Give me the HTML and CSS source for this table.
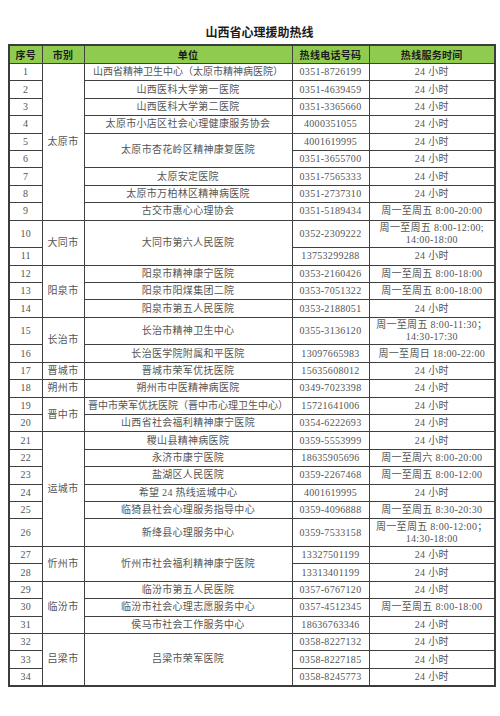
FILE: index.html
```html
<!DOCTYPE html>
<html lang="zh-CN">
<head>
<meta charset="utf-8">
<title>山西省心理援助热线</title>
<link rel="stylesheet" href="styles.css">
</head>
<body>
<div class="page">
  <h1 class="title">山西省心理援助热线</h1>
  <table class="hotline">
    <colgroup>
      <col class="c-no"><col class="c-city"><col class="c-unit"><col class="c-tel"><col class="c-time">
    </colgroup>
    <thead>
      <tr class="head"><th>序号</th><th>市别</th><th>单位</th><th>热线电话号码</th><th>热线服务时间</th></tr>
    </thead>
    <tbody>
      <tr><td>1</td><td rowspan="9">太原市</td><td class="tight">山西省精神卫生中心（太原市精神病医院）</td><td>0351-8726199</td><td>24 小时</td></tr>
      <tr><td>2</td><td>山西医科大学第一医院</td><td>0351-4639459</td><td>24 小时</td></tr>
      <tr><td>3</td><td>山西医科大学第二医院</td><td>0351-3365660</td><td>24 小时</td></tr>
      <tr><td>4</td><td>太原市小店区社会心理健康服务协会</td><td>4000351055</td><td>24 小时</td></tr>
      <tr><td>5</td><td rowspan="2">太原市杏花岭区精神康复医院</td><td>4001619995</td><td>24 小时</td></tr>
      <tr><td>6</td><td>0351-3655700</td><td>24 小时</td></tr>
      <tr><td>7</td><td>太原安定医院</td><td>0351-7565333</td><td>24 小时</td></tr>
      <tr><td>8</td><td>太原市万柏林区精神病医院</td><td>0351-2737310</td><td>24 小时</td></tr>
      <tr><td>9</td><td>古交市惠心心理协会</td><td>0351-5189434</td><td>周一至周五 8:00-20:00</td></tr>
      <tr class="tall"><td>10</td><td rowspan="2">大同市</td><td rowspan="2">大同市第六人民医院</td><td>0352-2309222</td><td>周一至周五 8:00-12:00;<br>14:00-18:00</td></tr>
      <tr><td>11</td><td>13753299288</td><td>24 小时</td></tr>
      <tr><td>12</td><td rowspan="3">阳泉市</td><td>阳泉市精神康宁医院</td><td>0353-2160426</td><td>周一至周五 8:00-18:00</td></tr>
      <tr><td>13</td><td>阳泉市阳煤集团二院</td><td>0353-7051322</td><td>周一至周五 8:00-18:00</td></tr>
      <tr><td>14</td><td>阳泉市第五人民医院</td><td>0353-2188051</td><td>24 小时</td></tr>
      <tr class="tall"><td>15</td><td rowspan="2">长治市</td><td>长治市精神卫生中心</td><td>0355-3136120</td><td>周一至周五 8:00-11:30；<br>14:30-17:30</td></tr>
      <tr><td>16</td><td>长治医学院附属和平医院</td><td>13097665983</td><td>周一至周日 18:00-22:00</td></tr>
      <tr><td>17</td><td>晋城市</td><td>晋城市荣军优抚医院</td><td>15635608012</td><td>24 小时</td></tr>
      <tr><td>18</td><td>朔州市</td><td>朔州市中医精神病医院</td><td>0349-7023398</td><td>24 小时</td></tr>
      <tr><td>19</td><td rowspan="2">晋中市</td><td class="tight">晋中市荣军优抚医院（晋中市心理卫生中心）</td><td>15721641006</td><td>24 小时</td></tr>
      <tr><td>20</td><td>山西省社会福利精神康宁医院</td><td>0354-6222693</td><td>24 小时</td></tr>
      <tr><td>21</td><td rowspan="6">运城市</td><td>稷山县精神病医院</td><td>0359-5553999</td><td>24 小时</td></tr>
      <tr><td>22</td><td>永济市康宁医院</td><td>18635905696</td><td>周一至周六 8:00-20:00</td></tr>
      <tr><td>23</td><td>盐湖区人民医院</td><td>0359-2267468</td><td>周一至周五 8:00-12:00</td></tr>
      <tr><td>24</td><td>希望 24 热线运城中心</td><td>4001619995</td><td>24 小时</td></tr>
      <tr><td>25</td><td>临猗县社会心理服务指导中心</td><td>0359-4096888</td><td>周一至周五 8:30-20:30</td></tr>
      <tr class="tall"><td>26</td><td>新绛县心理服务中心</td><td>0359-7533158</td><td>周一至周五 8:00-12:00；<br>14:30-18:00</td></tr>
      <tr><td>27</td><td rowspan="2">忻州市</td><td rowspan="2">忻州市社会福利精神康宁医院</td><td>13327501199</td><td>24 小时</td></tr>
      <tr><td>28</td><td>13313401199</td><td>24 小时</td></tr>
      <tr><td>29</td><td rowspan="3">临汾市</td><td>临汾市第五人民医院</td><td>0357-6767120</td><td>24 小时</td></tr>
      <tr><td>30</td><td>临汾市社会心理志愿服务中心</td><td>0357-4512345</td><td>周一至周五 8:00-18:00</td></tr>
      <tr><td>31</td><td>侯马市社会工作服务中心</td><td>18636763346</td><td>24 小时</td></tr>
      <tr><td>32</td><td rowspan="3">吕梁市</td><td rowspan="3">吕梁市荣军医院</td><td>0358-8227132</td><td>24 小时</td></tr>
      <tr><td>33</td><td>0358-8227185</td><td>24 小时</td></tr>
      <tr><td>34</td><td>0358-8245773</td><td>24 小时</td></tr>
    </tbody>
  </table>
</div>
</body>
</html>
```

FILE: styles.css
```css
html, body {
  margin: 0;
  padding: 0;
  background: #ffffff;
}

.page {
  width: 500px;
  height: 716px;
  padding: 24px 6px 0 8px;
  box-sizing: border-box;
  font-family: "Liberation Serif", "Noto Sans CJK SC", serif;
  color: #555555;
}

.title {
  margin: 0 0 4px 0;
  height: 16px;
  line-height: 16px;
  font-size: 12px;
  font-weight: 700;
  text-align: center;
  color: #1a1a1a;
  font-family: "Noto Sans CJK SC", sans-serif;
  padding-left: 17px;
}

.hotline {
  width: 486px;
  border-collapse: collapse;
  table-layout: fixed;
  border: 2px solid #3c3c3c;
  font-size: 10px;
  letter-spacing: 0.3px;
}

.c-no { width: 33px; }
.c-city { width: 42px; }
.c-unit { width: 208px; }
.c-tel { width: 77px; }
.c-time { width: 126px; }

.hotline th,
.hotline td {
  border: 1px solid #404040;
  padding: 0;
  text-align: center;
  vertical-align: middle;
  line-height: 12px;
  white-space: nowrap;
  overflow: hidden;
}

.hotline th {
  background: #8fcb4f;
  color: #1c1c1c;
  font-weight: 700;
  font-family: "Noto Sans CJK SC", sans-serif;
  height: 17px;
}

.hotline tbody tr { height: 17.4px; }
.hotline tbody tr.tall { height: 27.7px; }

.hotline td.tight { letter-spacing: 0; }
```
